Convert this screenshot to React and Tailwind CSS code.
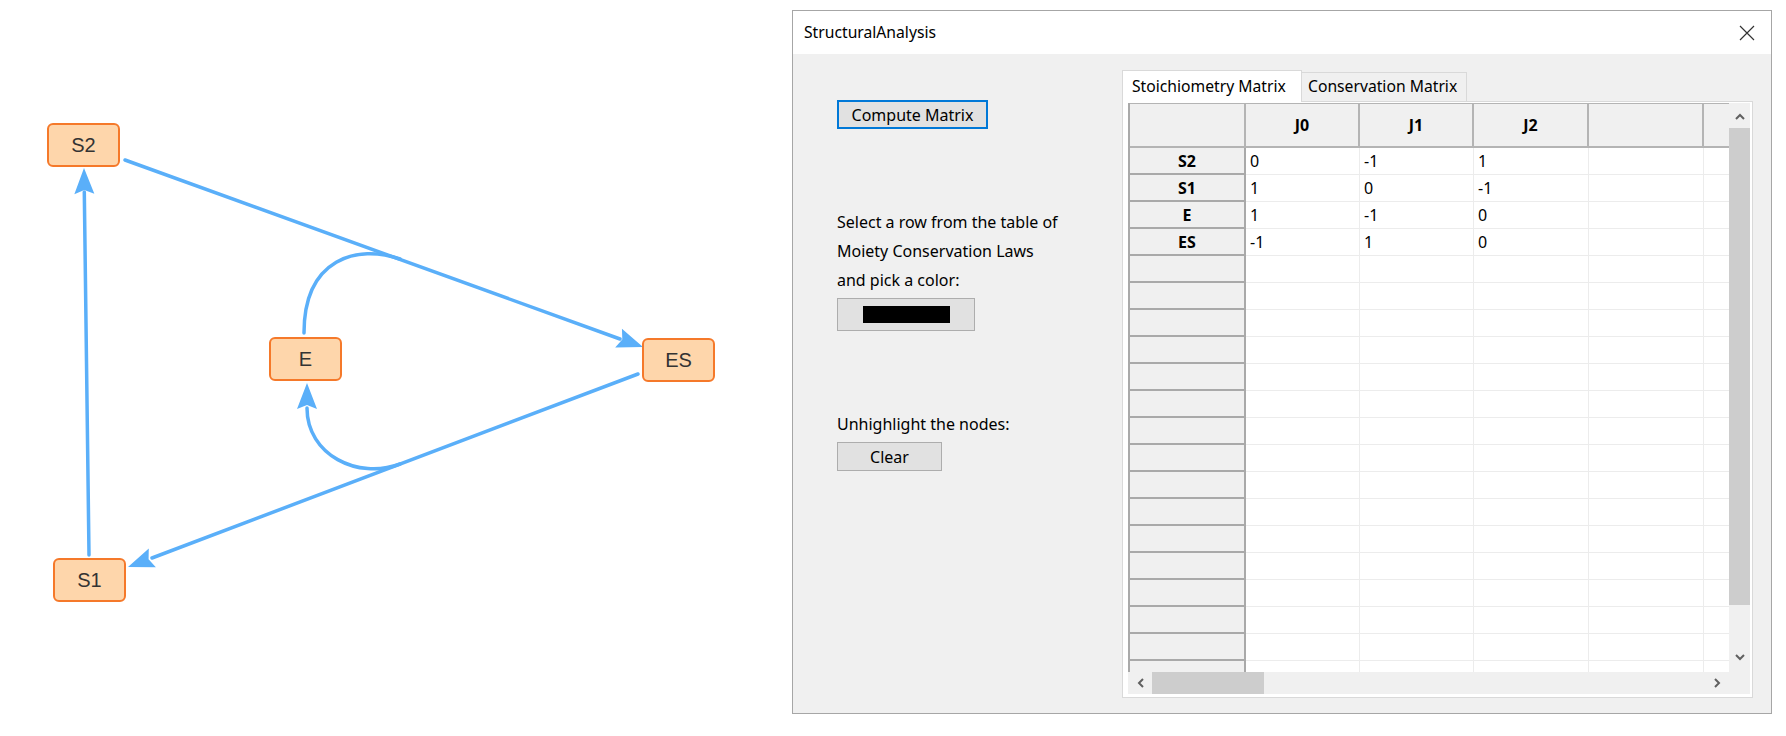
import React from 'react'

const EDGE = '#5aaff9'

// arrowhead polygon: tip + direction
function arrow(tx, ty, dx, dy, len = 26, half = 10) {
    const l = Math.hypot(dx, dy)
    const ux = dx / l
    const uy = dy / l
    const bx = tx - ux * len
    const by = ty - uy * len
    const nx = tx - ux * (len - 4)
    const ny = ty - uy * (len - 4)
    const px = -uy
    const py = ux
    return `${tx},${ty} ${bx + px * half},${by + py * half} ${nx},${ny} ${bx - px * half},${by - py * half}`
}

const nodes = [
    { id: 'S2', x: 47, y: 123 },
    { id: 'E', x: 269, y: 337 },
    { id: 'ES', x: 642, y: 338 },
    { id: 'S1', x: 53, y: 558 },
]

function Graph() {
    return (
        <div className="relative w-[792px] h-full">
            <svg className="absolute inset-0" width="792" height="736">
                <g stroke={EDGE} strokeWidth="3.5" fill="none" strokeLinecap="round">
                    <line x1="89" y1="555" x2="84.3" y2="192" />
                    <line x1="125" y1="160" x2="620" y2="339" />
                    <line x1="638" y1="374" x2="152" y2="558" />
                    <path d="M304 333 C304 258 358 244 400 259" />
                    <path d="M400 464 C358 480 307 455 307 408" />
                </g>
                <g fill={EDGE}>
                    <polygon points={arrow(84, 168, -5, -387)} />
                    <polygon points={arrow(643, 347, 518, 187)} />
                    <polygon points={arrow(128, 567, -510, 193)} />
                    <polygon points={arrow(307, 383, 0, -1)} />
                </g>
            </svg>
            {nodes.map((n) => (
                <div
                    key={n.id}
                    className="absolute w-[73px] h-[44px] flex items-center justify-center rounded-[6px] border-[2.5px] border-[#f5792a] bg-[#fed6ab] text-[20px] text-[#333] font-['Liberation_Sans',sans-serif]"
                    style={{ left: n.x, top: n.y }}
                >
                    {n.id}
                </div>
            ))}
        </div>
    )
}

const rows = [
    ['S2', '0', '-1', '1'],
    ['S1', '1', '0', '-1'],
    ['E', '1', '-1', '0'],
    ['ES', '-1', '1', '0'],
]
const emptyRows = Array.from({ length: 16 })
const colW = ['w-[114px]', 'w-[114px]', 'w-[115px]', 'w-[115px]', 'w-[60px]']

function Chevron({ dir }) {
    const pts = {
        up: '1,6 5,2 9,6',
        down: '1,2 5,6 9,2',
        left: '6,1 2,5 6,9',
        right: '2,1 6,5 2,9',
    }[dir]
    const vertical = dir === 'up' || dir === 'down'
    return (
        <svg width={vertical ? 10 : 8} height={vertical ? 8 : 10} viewBox={vertical ? '0 0 10 8' : '0 0 8 10'}>
            <polyline points={pts} fill="none" stroke="#606060" strokeWidth="2" />
        </svg>
    )
}

function DataRow({ label, cells }) {
    return (
        <div className="flex h-[27px] shrink-0">
            <div className="w-[116px] shrink-0 bg-[#f0f0f0] border-r-2 border-b-2 border-[#a9a9a9] flex items-center justify-center font-bold">
                {label}
            </div>
            {colW.map((w, i) => (
                <div key={i} className={`${w} shrink-0 bg-white border-r border-b border-[#ececec] flex items-center pl-[4px]`}>
                    {cells ? cells[i] : ''}
                </div>
            ))}
        </div>
    )
}

function Matrix() {
    return (
        <div className="grid grid-cols-[1fr_21px] grid-rows-[1fr_22px] h-full text-[16px]">
            <div className="overflow-hidden flex flex-col border-l-2 border-[#a9a9a9]">
                <div className="flex h-[45px] shrink-0 bg-[#f0f0f0]">
                    <div className="w-[116px] shrink-0 border-r-2 border-b-2 border-t border-[#b4b4b4]" />
                    {['J0', 'J1', 'J2', '', ''].map((h, i) => (
                        <div key={i} className={`${colW[i]} shrink-0 border-r-2 border-b-2 border-t border-[#b4b4b4] flex items-center justify-center font-bold`}>
                            {h}
                        </div>
                    ))}
                </div>
                {rows.map((r) => (
                    <DataRow key={r[0]} label={r[0]} cells={[r[1], r[2], r[3], '', '']} />
                ))}
                {emptyRows.map((_, i) => (
                    <DataRow key={i} label="" />
                ))}
            </div>
            <div className="bg-[#f0f0f0] flex flex-col">
                <div className="h-[25px] flex items-center justify-center pt-[3px]">
                    <Chevron dir="up" />
                </div>
                <div className="h-[477px] bg-[#cdcdcd]" />
                <div className="flex-1" />
                <div className="h-[26px] flex items-center justify-center pb-[4px]">
                    <Chevron dir="down" />
                </div>
            </div>
            <div className="bg-[#f0f0f0] flex items-center">
                <div className="w-[24px] flex items-center justify-center pl-[2px]">
                    <Chevron dir="left" />
                </div>
                <div className="w-[112px] h-full bg-[#cdcdcd]" />
                <div className="flex-1" />
                <div className="w-[24px] flex items-center justify-center">
                    <Chevron dir="right" />
                </div>
            </div>
            <div className="bg-[#f0f0f0]" />
        </div>
    )
}

function WinButton({ className, children }) {
    return (
        <button className={`bg-[#e1e1e1] flex items-center justify-center text-[16px] text-black ${className}`}>
            {children}
        </button>
    )
}

function StructuralAnalysis() {
    return (
        <div className="w-[980px] h-[704px] mt-[10px] border border-[#a6a6a6] flex flex-col bg-[#f0f0f0] font-['Noto_Sans',sans-serif] text-[16px] text-black">
            <div className="h-[43px] shrink-0 bg-white flex items-center justify-between pl-[11px] pr-[16px]">
                <span className="text-[15.7px] pt-[1px]">StructuralAnalysis</span>
                <svg width="16" height="16" viewBox="0 0 16 16">
                    <path d="M1 1 L15 15 M15 1 L1 15" stroke="#333" strokeWidth="1.2" />
                </svg>
            </div>
            <div className="flex flex-1 min-h-0 pb-[15px] pr-[18px]">
                <div className="w-[329px] shrink-0 flex flex-col pl-[44px] pt-[46px]">
                    <WinButton className="w-[151px] h-[29px] border-2 border-[#0078d7]">Compute Matrix</WinButton>
                    <div className="mt-[79px] leading-[29px]">
                        <div>Select a row from the table of</div>
                        <div>Moiety Conservation Laws</div>
                        <div>and pick a color:</div>
                    </div>
                    <WinButton className="mt-[3px] w-[138px] h-[33px] border border-[#adadad]">
                        <span className="w-[87px] h-[17px] bg-black block" />
                    </WinButton>
                    <div className="mt-[79px] leading-[29px]">Unhighlight the nodes:</div>
                    <WinButton className="mt-[3px] w-[105px] h-[29px] border border-[#adadad]">Clear</WinButton>
                </div>
                <div className="flex-1 flex flex-col pt-[15px]">
                    <div className="flex items-end h-[32px] shrink-0 text-[15.7px]">
                        <div className="w-[180px] h-[32px] bg-white border border-b-0 border-[#d9d9d9] pl-[9px] flex items-center relative top-[1px]">
                            Stoichiometry Matrix
                        </div>
                        <div className="w-[165px] h-[29px] border border-l-0 border-b-0 border-[#d9d9d9] pl-[6px] flex items-center">
                            Conservation Matrix
                        </div>
                    </div>
                    <div className="flex-1 min-h-0 bg-white border border-[#d9d9d9] pl-[5px] pr-[2px] pt-[1px] pb-[3px]">
                        <Matrix />
                    </div>
                </div>
            </div>
        </div>
    )
}

export default function App() {
    return (
        <div className="w-[1786px] h-[736px] bg-white flex overflow-hidden">
            <Graph />
            <StructuralAnalysis />
        </div>
    )
}
